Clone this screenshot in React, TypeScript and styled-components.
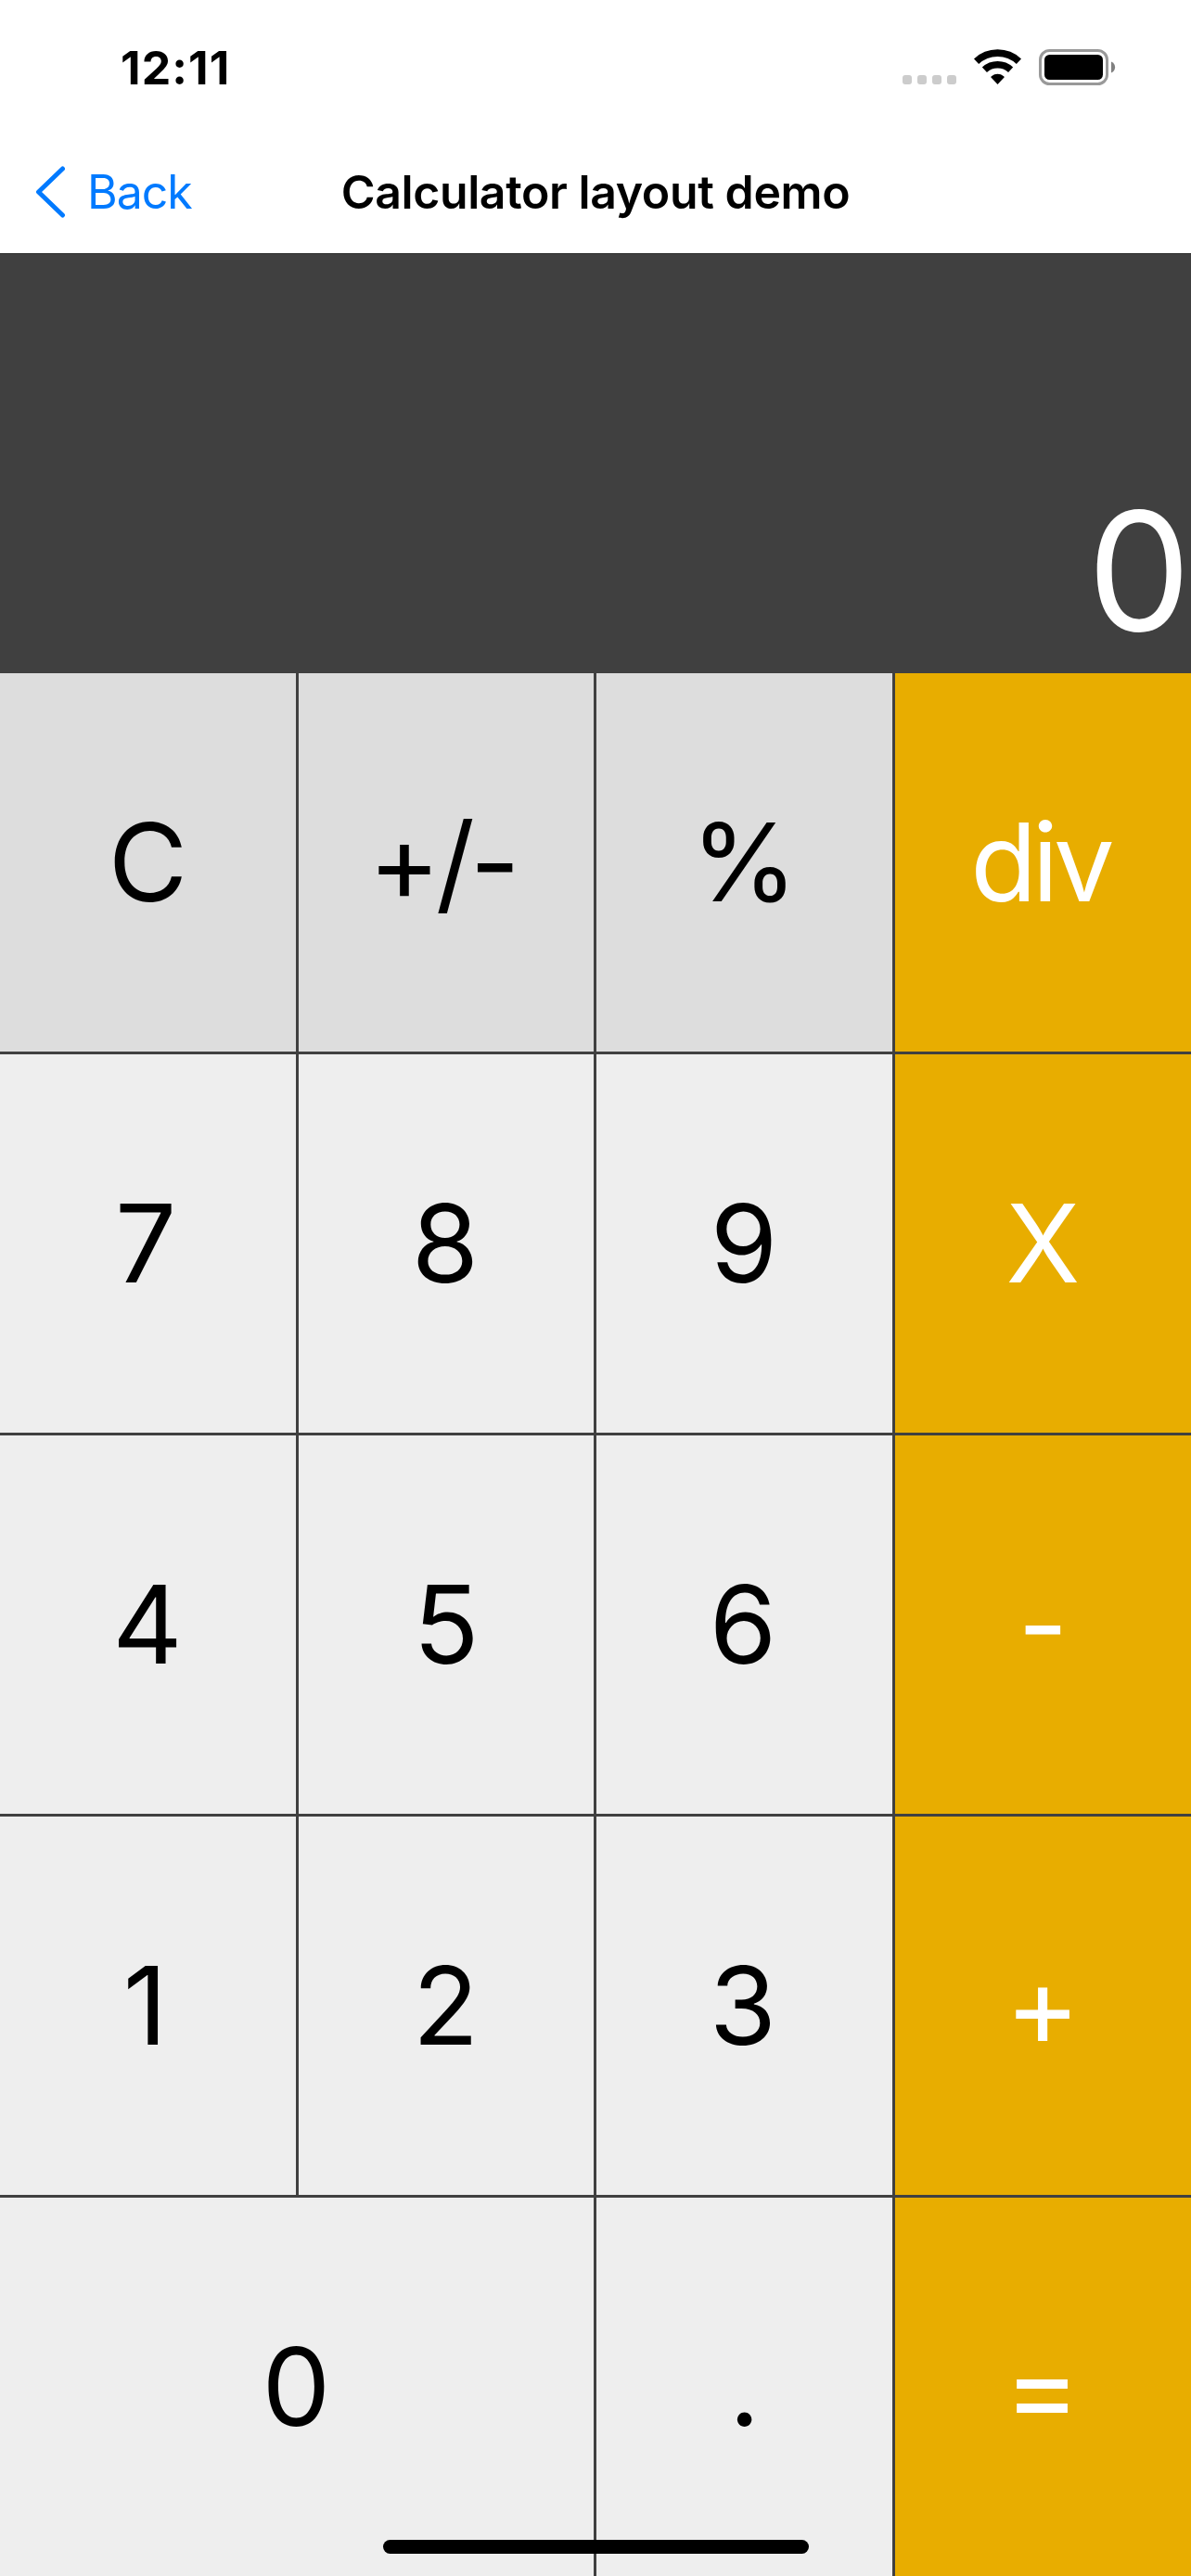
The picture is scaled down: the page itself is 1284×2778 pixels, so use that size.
import React from "react";
import styled, { createGlobalStyle } from "styled-components";

const GlobalStyle = createGlobalStyle`
  * { box-sizing: border-box; }
  body { margin: 0; background: #fff; }
`;

const Screen = styled.main`
  position: relative;
  display: flex;
  flex-direction: column;
  width: 1284px;
  height: 2778px;
  overflow: hidden;
  background: #fff;
  color: #000;
  font-family: Inter, "Liberation Sans", sans-serif;
`;

const StatusBar = styled.header`
  display: flex;
  justify-content: space-between;
  height: 141px;
  padding: 0 81px 0 130px;
`;

const Clock = styled.time`
  padding-top: 43px;
  font-size: 50px;
  line-height: 60px;
  font-weight: 650;
  letter-spacing: 1.1px;
`;

const StatusIcons = styled.div`
  display: flex;
  padding-top: 53px;
`;

const NavBar = styled.nav`
  display: grid;
  grid-template-columns: 300px 1fr 300px;
  align-items: center;
  height: 132px;
`;

const BackButton = styled.button`
  display: flex;
  align-items: center;
  gap: 23px;
  padding: 0 0 0 38px;
  border: 0;
  background: none;
  color: #007aff;
  font: 400 50px/60px Inter, "Liberation Sans", sans-serif;
  letter-spacing: -1px;
`;

const Title = styled.h1`
  margin: 0;
  text-align: center;
  font-size: 50px;
  line-height: 60px;
  font-weight: 600;
  letter-spacing: -0.4px;
  white-space: nowrap;
`;

const Calculator = styled.section`
  display: grid;
  flex: 1;
  grid-template-rows: 450px 1fr;
  gap: 3px;
  background: #404040;
`;

const Display = styled.output`
  display: flex;
  justify-content: flex-end;
  align-items: flex-end;
  border-top: 1px solid #2c2e2d;
  color: #fff;
  font-size: 177px;
  line-height: 214px;
`;

const Keypad = styled.div`
  display: grid;
  grid-template-columns: 319px 318px 319px 319px;
  grid-template-rows: repeat(5, 408px);
  gap: 3px;
`;

type Tone = "digit" | "function" | "operator";

const backgrounds: Record<Tone, string> = {
  digit: "#eeeeee",
  function: "#dddddd",
  operator: "#e8ad00",
};

interface KeyStyle {
  $tone: Tone;
  $wide?: boolean;
  $size?: number;
  $tracking?: number;
  $indent?: number;
}

const Key = styled.button<KeyStyle>`
  grid-column: span ${(p) => (p.$wide ? 2 : 1)};
  padding: 0;
  border: 0;
  background: ${(p) => backgrounds[p.$tone]};
  color: ${(p) => (p.$tone === "operator" ? "#fff" : "#000")};
  font-family: Inter, "Liberation Sans", sans-serif;
  font-size: ${(p) => p.$size ?? 117}px;
  line-height: 142px;
  letter-spacing: ${(p) => p.$tracking ?? 0}px;
  text-indent: ${(p) => p.$indent ?? 0}px;
`;

const HomeIndicator = styled.div`
  position: absolute;
  left: 413px;
  bottom: 24px;
  width: 459px;
  height: 15px;
  border-radius: 8px;
  background: #000;
`;

interface KeySpec {
  label: string;
  tone: Tone;
  wide?: boolean;
  size?: number;
  tracking?: number;
  indent?: number;
}

const keys: KeySpec[] = [
  { label: "C", tone: "function" },
  { label: "+/-", tone: "function", tracking: -5, indent: -9 },
  { label: "%", tone: "function" },
  { label: "div", tone: "operator", tracking: -5, indent: -6 },
  { label: "7", tone: "digit", indent: -5 },
  { label: "8", tone: "digit", indent: -2 },
  { label: "9", tone: "digit", indent: -1 },
  { label: "X", tone: "operator" },
  { label: "4", tone: "digit", indent: -1 },
  { label: "5", tone: "digit" },
  { label: "6", tone: "digit", indent: -3 },
  { label: "-", tone: "operator" },
  { label: "1", tone: "digit", indent: -6 },
  { label: "2", tone: "digit", indent: -1 },
  { label: "3", tone: "digit", indent: -3 },
  { label: "+", tone: "operator", size: 122, indent: -1 },
  { label: "0", tone: "digit", wide: true, indent: -1 },
  { label: ".", tone: "digit" },
  { label: "=", tone: "operator", size: 124, indent: -2 },
];

const StatusGlyphs = () => (
  <svg width="230" height="40" viewBox="0 0 230 40" aria-hidden="true">
    {[0, 16, 32, 48].map((x) => (
      <rect key={x} x={x} y="28" width="10" height="10" rx="3" fill="#ccc" />
    ))}
    <g fill="none" stroke="#000" strokeWidth="7.6">
      <path d="M79.6 13.2 A33.5 33.5 0 0 1 125.4 13.2" />
      <path d="M88.4 22.2 A21 21 0 0 1 116.6 22.2" />
    </g>
    <path d="M95.5 30.6 Q95 29.8 95.8 29.2 A11.5 11.5 0 0 1 109.2 29.2 Q110 29.8 109.5 30.6 L102.5 38 Z" />
    <rect x="148.5" y="1.5" width="72" height="36" rx="10" fill="none" stroke="#999" strokeWidth="3" />
    <rect x="153" y="6" width="63" height="27" rx="5.5" />
    <path d="M225 13.5 C230.5 15.5 230.5 23.5 225 25.5 Z" fill="#808080" />
  </svg>
);

const App = () => (
  <>
    <GlobalStyle />
    <Screen>
      <StatusBar>
        <Clock>12:11</Clock>
        <StatusIcons>
          <StatusGlyphs />
        </StatusIcons>
      </StatusBar>
      <NavBar>
        <BackButton>
          <svg width="33" height="56" viewBox="0 0 33 56" fill="none" aria-hidden="true">
            <path d="M29.5 3 L3.5 28 L29.5 53" stroke="currentColor" strokeWidth="5" strokeLinecap="round" strokeLinejoin="round" />
          </svg>
          Back
        </BackButton>
        <Title>Calculator layout demo</Title>
      </NavBar>
      <Calculator>
        <Display>0</Display>
        <Keypad>
          {keys.map((k) => (
            <Key
              key={k.label}
              $tone={k.tone}
              $wide={k.wide}
              $size={k.size}
              $tracking={k.tracking}
              $indent={k.indent}
            >
              {k.label}
            </Key>
          ))}
        </Keypad>
      </Calculator>
      <HomeIndicator />
    </Screen>
  </>
);

export default App;
